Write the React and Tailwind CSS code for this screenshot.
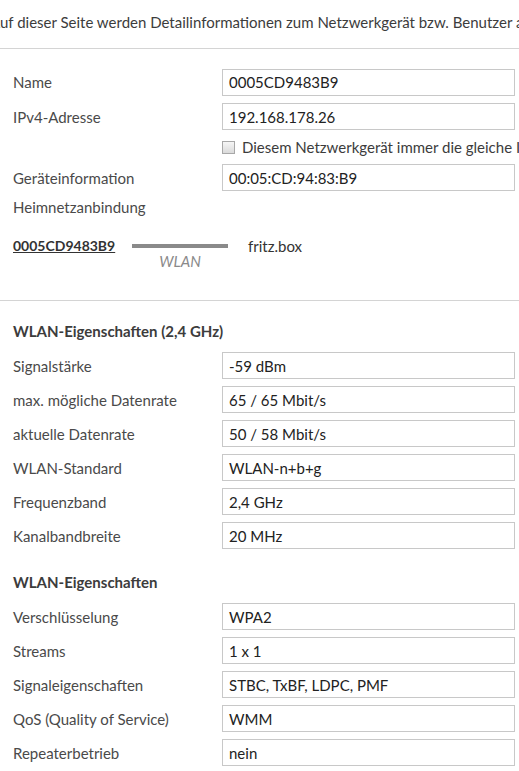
import React from 'react';

const Field = ({ label, value, className = '' }) => (
  <div className={`flex items-center h-[27px] ${className}`}>
    <span className="w-[209px] shrink-0 whitespace-nowrap text-[#4a4a4a]">{label}</span>
    <div className="w-[293px] shrink-0 h-[27px] border border-[#c8c8c8] bg-white px-[6px] flex items-center text-[#222]">
      {value}
    </div>
  </div>
);

const App = () => {
  const wlan24 = [
    ['Signalstärke', '-59 dBm'],
    ['max. mögliche Datenrate', '65 / 65 Mbit/s'],
    ['aktuelle Datenrate', '50 / 58 Mbit/s'],
    ['WLAN-Standard', 'WLAN-n+b+g'],
    ['Frequenzband', '2,4 GHz'],
    ['Kanalbandbreite', '20 MHz'],
  ];
  const wlan = [
    ['Verschlüsselung', 'WPA2'],
    ['Streams', '1 x 1'],
    ['Signaleigenschaften', 'STBC, TxBF, LDPC, PMF'],
    ['QoS (Quality of Service)', 'WMM'],
    ['Repeaterbetrieb', 'nein'],
  ];

  return (
    <div className="w-[519px] h-[771px] overflow-hidden bg-white font-['Lato','Noto_Sans',sans-serif] text-[15px] leading-[18px]">
      {/* Intro */}
      <div className="h-[49px] border-b border-[#d4d4d4] pt-[13px] overflow-hidden">
        <p className="-ml-[10px] whitespace-nowrap text-[#3c3c3c]">
          Auf dieser Seite werden Detailinformationen zum Netzwerkgerät bzw. Benutzer angezeigt.
        </p>
      </div>

      {/* Device */}
      <div className="pl-[13px] pt-[19px] h-[252px] border-b border-[#d4d4d4]">
        <Field label="Name" value="0005CD9483B9" className="h-[28px]" />
        <Field label="IPv4-Adresse" value="192.168.178.26" className="mt-[7px]" />
        <div className="flex items-center h-[20px] mt-[7px] overflow-hidden">
          <span className="w-[209px] shrink-0" />
          <span className="w-[13px] h-[13px] shrink-0 border border-[#a8a8a8] bg-gradient-to-b from-[#f6f6f6] to-[#dadada] mr-[7px]" />
          <span className="whitespace-nowrap text-[#3c3c3c]">Diesem Netzwerkgerät immer die gleiche IPv4-Adresse zuweisen.</span>
        </div>
        <Field label="Geräteinformation" value="00:05:CD:94:83:B9" className="mt-[7px]" />
        <div className="h-[18px] mt-[7px] text-[#4a4a4a]">Heimnetzanbindung</div>
        <div className="flex items-start mt-[22px]">
          <span className="font-bold underline text-[#333] text-[14px] w-[119px] shrink-0 leading-[16px] whitespace-nowrap">0005CD9483B9</span>
          <div className="flex flex-col items-center w-[96px] shrink-0">
            <span className="block w-[96px] h-[4px] bg-[#8a8a8a] mt-[6px]" />
            <span className="italic text-[#8a8a8a] mt-[5px] leading-[16px]">WLAN</span>
          </div>
          <span className="ml-[20px] text-[#333] leading-[16px]">fritz.box</span>
        </div>
      </div>

      {/* WLAN 2,4 GHz */}
      <div className="pl-[13px] pt-[21px]">
        <h3 className="font-bold text-[#3c3c3c] h-[18px]">WLAN-Eigenschaften (2,4 GHz)</h3>
        <div className="flex flex-col gap-[7px] mt-[12px]">
          {wlan24.map(([l, v]) => (
            <Field key={l} label={l} value={v} />
          ))}
        </div>

        <h3 className="font-bold text-[#3c3c3c] h-[18px] mt-[24px]">WLAN-Eigenschaften</h3>
        <div className="flex flex-col gap-[7px] mt-[12px]">
          {wlan.map(([l, v]) => (
            <Field key={l} label={l} value={v} />
          ))}
        </div>
      </div>
    </div>
  );
};

export default App;
